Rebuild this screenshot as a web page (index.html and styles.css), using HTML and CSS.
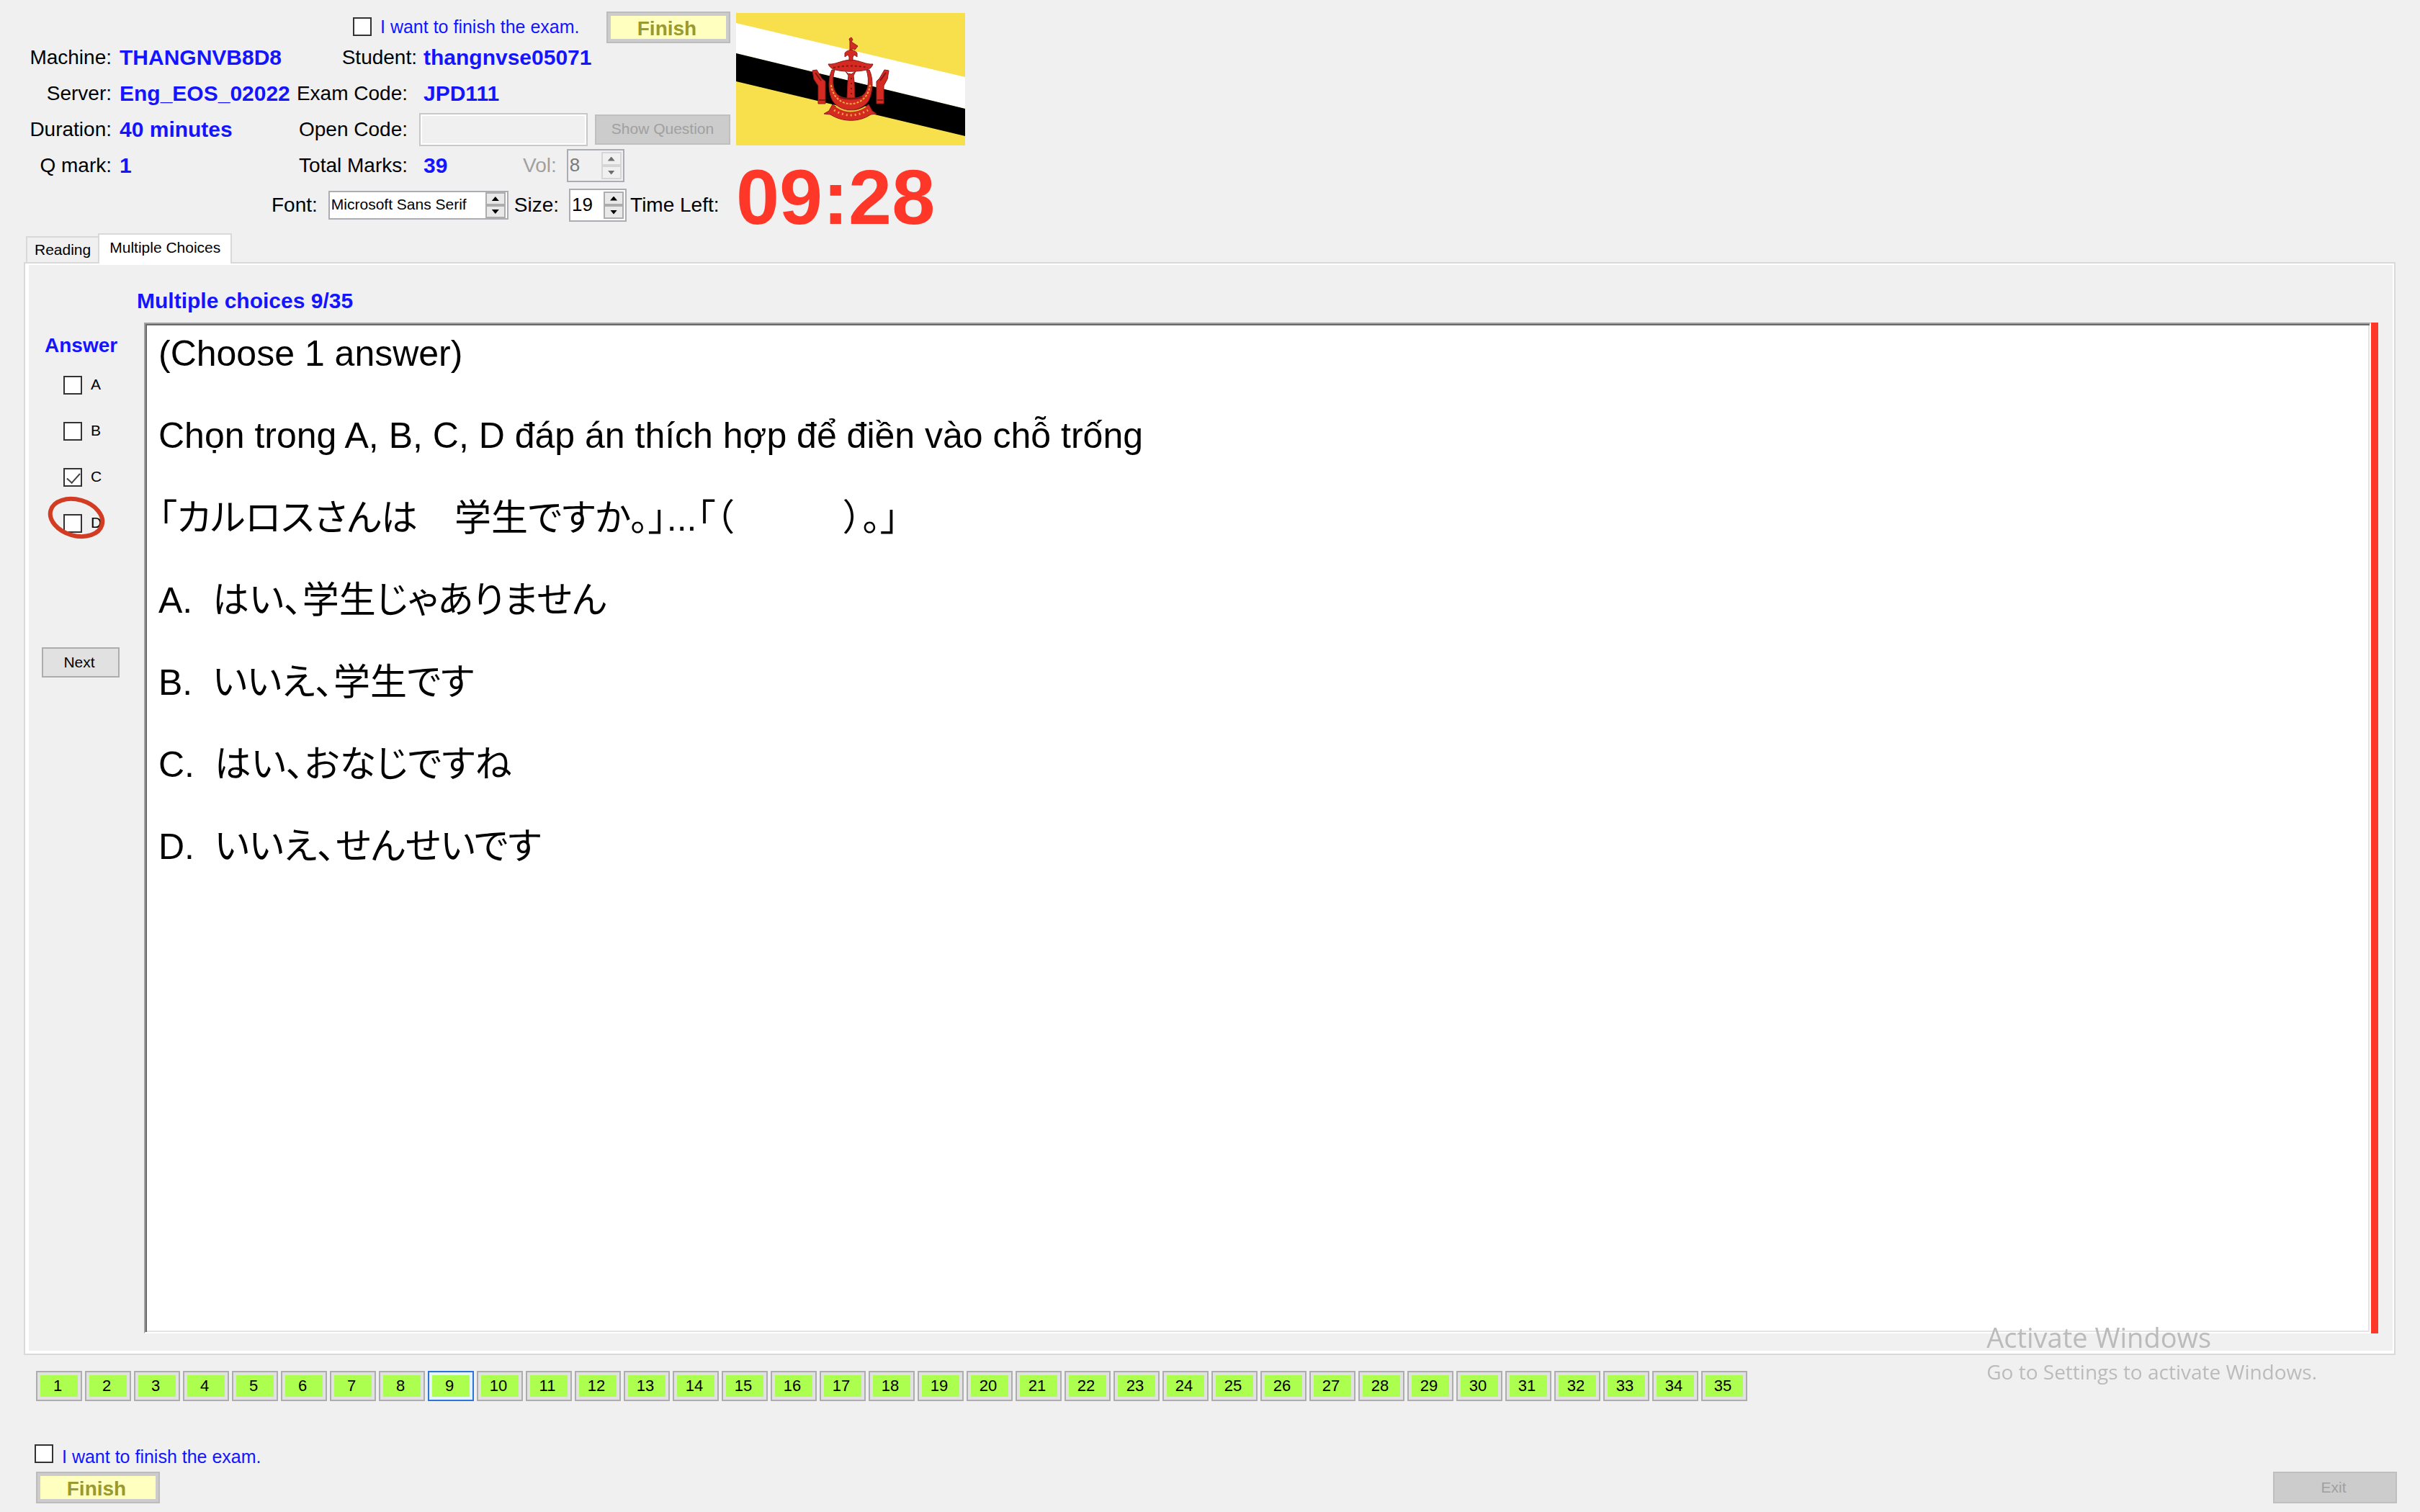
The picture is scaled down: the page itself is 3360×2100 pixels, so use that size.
FILE: index.html
```html
<!DOCTYPE html>
<html lang="en">
<head>
<meta charset="utf-8">
<title>Exam Client</title>
<link rel="stylesheet" href="styles.css">
</head>
<body>
<header class="top">
  <form class="info">
    <div class="finish-row">
      <label class="confirm"><input type="checkbox" class="check">I want to finish the exam.</label>
      <button type="button" class="btn btn-finish" disabled>Finish</button>
    </div>
    <dl class="facts">
      <dt>Machine:</dt><dd>THANGNVB8D8</dd>
      <dt class="near">Student:</dt><dd class="wide">thangnvse05071</dd>
      <dt>Server:</dt><dd>Eng_EOS_02022</dd>
      <dt>Exam Code:</dt><dd class="wide">JPD111</dd>
      <dt>Duration:</dt><dd>40 minutes</dd>
      <dt><label for="open-code">Open Code:</label></dt>
      <dd class="controls"><input type="text" id="open-code" class="open-code" disabled><button type="button" class="btn btn-show" disabled>Show Question</button></dd>
      <dt>Q mark:</dt><dd>1</dd>
      <dt>Total Marks:</dt>
      <dd class="controls marks"><span class="total">39</span><label for="vol" class="dim">Vol:</label>
        <span class="spinner off"><input type="text" id="vol" value="8" disabled><span class="steps"><button type="button" class="up" aria-label="Volume up" disabled></button><button type="button" class="down" aria-label="Volume down" disabled></button></span></span></dd>
    </dl>
    <div class="font-row">
      <label for="font">Font:</label>
      <span class="spinner font-box"><input type="text" id="font" value="Microsoft Sans Serif"><span class="steps"><button type="button" class="up" aria-label="Previous font"></button><button type="button" class="down" aria-label="Next font"></button></span></span>
      <label for="size" class="size-label">Size:</label>
      <span class="spinner"><input type="text" id="size" value="19"><span class="steps"><button type="button" class="up" aria-label="Larger"></button><button type="button" class="down" aria-label="Smaller"></button></span></span>
      <span class="left-label">Time Left:</span>
    </div>
  </form>
  <div class="clock">
    <svg class="flag" viewBox="0 0 318 184" role="img" aria-label="Flag of Brunei">
      <rect width="318" height="184" fill="#f7e04b"/>
      <path d="M0 14 318 89V133L0 56Z" fill="#fff"/>
      <path d="M0 56 318 133V171L0 95Z" fill="#000"/>
      <g fill="#d42a22" stroke="#8e1a17" stroke-width="1">
        <path d="M133 79C127 92 128 112 134 122C145 139 173 139 184 122C190 110 191 92 185 79L181 79C186 95 183 110 175 115C166 120 152 120 143 115C135 110 132 95 137 79Z"/>
        <path d="M155 84 152 81 156 87 155 96 154 118H165L164 96 163 87 166 81 160 85Z"/>
        <path d="M128 71C138 72 145 66 159 65C173 66 180 72 190 71C188 77 184 78 181 79C168 82 150 82 138 79C134 78 130 76 128 71Z"/>
        <path d="M151 61V56C153 52 156 53 158 51H161C163 53 166 52 168 56V61L164 58 162 61V66H157V61L155 58Z"/>
        <path d="M158 51V39L157 36 160 34 162 37 160 40 169 46 165 51 161 49V52Z"/>
        <path d="M106 80 112 79 119 91 124 95V126H114V101L108 92Z"/>
        <path d="M212 80 206 79 199 91 195 95V126H205V101L210 92Z"/>
        <path d="M134 127C149 139 169 139 184 127L189 136 195 140 187 141C171 152 148 152 131 141L122 140 129 136Z"/>
      </g>
      <g fill="none" stroke="#7c1815" stroke-width="2">
        <path d="M110 83 118 94M208 83 200 94M115 121H124M196 121H204M143 117Q159 122 175 117"/>
        <path d="M135 76Q159 71 183 76" stroke-dasharray="3 3"/>
        <path d="M160 90V116" stroke-dasharray="2 5"/>
      </g>
      <g fill="none" stroke="#f2a83a" stroke-width="2">
        <path d="M132 100C136 135 182 135 186 100" stroke-dasharray="3 2"/>
        <path d="M139 130Q159 143 180 130" stroke="#e8c93c"/>
        <path d="M136 135Q159 149 183 135" stroke-width="3" stroke-dasharray="2 4"/>
      </g>
    </svg>
    <output class="time">09:28</output>
  </div>
</header>

<nav class="tabs" role="tablist">
  <button type="button" class="tab" role="tab" aria-selected="false">Reading</button>
  <button type="button" class="tab current" role="tab" aria-selected="true">Multiple Choices</button>
</nav>

<main class="panel">
  <div class="sheet">
    <h1 class="title">Multiple choices 9/35</h1>
    <div class="work">
      <fieldset class="answers">
        <legend>Answer</legend>
        <label class="choice"><input type="checkbox" class="check">A</label>
        <label class="choice"><input type="checkbox" class="check">B</label>
        <label class="choice"><input type="checkbox" class="check" checked>C</label>
        <label class="choice"><input type="checkbox" class="check">D
          <svg class="ring" viewBox="0 0 80 64" aria-hidden="true"><ellipse cx="40" cy="32" rx="37" ry="25" transform="rotate(16 40 32)" fill="none" stroke="#d23c22" stroke-width="6"/></svg>
        </label>
        <button type="button" class="btn btn-next">Next</button>
      </fieldset>
      <article class="question">
        <p>(Choose 1 answer)</p>
        <p lang="vi">Chọn trong A, B, C, D đáp án thích hợp để điền vào chỗ trống</p>
        <p><span class="ja" lang="ja">「カルロスさんは　学生ですか。」</span>...<span class="ja" lang="ja">「（　　　）。」</span></p>
        <p>A.&nbsp; <span class="ja" lang="ja">はい、学生じゃありません</span></p>
        <p>B.&nbsp; <span class="ja" lang="ja">いいえ、学生です</span></p>
        <p>C.&nbsp; <span class="ja" lang="ja">はい、おなじですね</span></p>
        <p>D.&nbsp; <span class="ja" lang="ja">いいえ、せんせいです</span></p>
      </article>
      <div class="strip"></div>
    </div>
  </div>
</main>

<nav class="numbers" aria-label="Questions">
  <button type="button">1</button><button type="button">2</button><button type="button">3</button><button type="button">4</button><button type="button">5</button><button type="button">6</button><button type="button">7</button><button type="button">8</button><button type="button" class="active">9</button><button type="button">10</button><button type="button">11</button><button type="button">12</button><button type="button">13</button><button type="button">14</button><button type="button">15</button><button type="button">16</button><button type="button">17</button><button type="button">18</button><button type="button">19</button><button type="button">20</button><button type="button">21</button><button type="button">22</button><button type="button">23</button><button type="button">24</button><button type="button">25</button><button type="button">26</button><button type="button">27</button><button type="button">28</button><button type="button">29</button><button type="button">30</button><button type="button">31</button><button type="button">32</button><button type="button">33</button><button type="button">34</button><button type="button">35</button>
</nav>

<footer class="bottom">
  <div class="bottom-finish">
    <label class="confirm"><input type="checkbox" class="check">I want to finish the exam.</label>
    <button type="button" class="btn btn-finish" disabled>Finish</button>
  </div>
  <button type="button" class="btn btn-exit" disabled>Exit</button>
</footer>

<aside class="watermark">
  <p class="wm-title">Activate Windows</p>
  <p class="wm-text">Go to Settings to activate Windows.</p>
</aside>
</body>
</html>
```
FILE: styles.css
```css
* { box-sizing: border-box; }

body {
  margin: 0;
  padding: 16px 0 12px;
  min-height: 100vh;
  display: flex;
  flex-direction: column;
  background: #f0f0f0;
  color: #000;
  font: 28px/50px "Liberation Sans", "Noto Sans CJK JP", sans-serif;
}

button, input { font: inherit; color: inherit; margin: 0; border-radius: 0; }
p, h1, dl, dd { margin: 0; }

/* Tick boxes */
.check {
  appearance: none;
  flex: none;
  width: 26px;
  height: 26px;
  border: 2px solid #333;
  background: #fff;
}
.check:checked::after {
  content: "";
  display: block;
  width: 16px;
  height: 8px;
  margin: 5px 3px;
  border: solid #444;
  border-width: 0 0 2px 2px;
  transform: rotate(-48deg);
}
.confirm {
  display: flex;
  gap: 12px;
  color: #1414ff;
  font-size: 25px;
  line-height: 26px;
}

/* Buttons */
.btn {
  padding: 0;
  border: 2px solid #adadad;
  background: #e1e1e1;
  font-size: 21px;
  line-height: 24px;
  text-align: center;
}
.btn:disabled { border-color: #bfbfbf; background: #ccc; color: #a0a0a0; }
.btn-finish:disabled {
  width: 172px;
  height: 44px;
  border-color: #bcbcbc;
  background: #ffffc0;
  box-shadow: inset 0 0 0 4px #ccc;
  color: #99992e;
  font-size: 28px;
  font-weight: bold;
  line-height: 36px;
  padding: 3px 4px 0 0;
}
.btn-show { width: 188px; height: 42px; padding-bottom: 2px; }
.btn-next { width: 108px; height: 42px; padding-right: 4px; }
.btn-exit { width: 172px; height: 44px; padding-right: 4px; }

/* Header */
.top { display: flex; gap: 8px; padding-bottom: 9px; }
.info { width: 1014px; flex: none; }
.finish-row {
  display: flex;
  align-items: flex-start;
  justify-content: space-between;
  height: 39px;
  padding-left: 490px;
}
.finish-row .confirm { padding-top: 8px; }

.facts {
  display: grid;
  grid-template-columns: 155px 256px 171px 1fr;
  grid-auto-rows: 50px;
  white-space: nowrap;
}
.facts dt { text-align: right; }
.facts dt:nth-of-type(even) { padding-right: 16px; }
.facts dt.near:nth-of-type(even) { padding-right: 3px; }
.facts dd { padding-left: 11px; color: #1414ff; font-size: 30px; font-weight: bold; }
.facts dd.wide { padding-left: 6px; }
.facts dd.controls {
  display: flex;
  align-items: center;
  gap: 10px;
  padding: 0;
  font-weight: normal;
}
.facts dd.marks { gap: 0; }
.total { width: 144px; padding-left: 6px; font-weight: bold; }
.dim { margin-right: 14px; color: #a0a0a0; font-size: 28px; }
.open-code {
  width: 234px;
  height: 46px;
  border: 2px solid #c8c8c8;
  background: #f0f0f0;
  box-shadow: inset 0 0 0 2px #fff;
}

.spinner {
  display: flex;
  width: 80px;
  height: 46px;
  padding: 2px;
  border: 2px solid #abadb3;
  background: #fff;
  color: #000;
}
.spinner input {
  flex: 1;
  min-width: 0;
  padding: 0 0 2px;
  border: 0;
  background: none;
  font-size: 26px;
  line-height: 34px;
}
.font-box { width: 250px; height: 40px; padding: 0 2px; }
.spinner.font-box input { font-size: 21px; line-height: 30px; }
.spinner.off { background: #f0f0f0; color: #7a7a7a; }
.steps { display: flex; flex-direction: column; width: 28px; }
.steps button {
  flex: 1;
  display: grid;
  place-items: center;
  padding: 0;
  border: 2px solid #adadad;
  background: #e9e9e9;
}
.steps button::after {
  content: "";
  width: 10px;
  height: 6px;
  background: #000;
  clip-path: polygon(50% 0, 100% 100%, 0 100%);
}
.steps .down::after { clip-path: polygon(0 0, 100% 0, 50% 100%); }
.off .steps button { border-color: #d6d6d6; background: #f0f0f0; }
.off .steps button::after { background: #6d6d6d; }

.font-row { display: flex; align-items: center; height: 60px; padding-left: 377px; }
.font-box { margin: 0 8px 0 15px; }
.size-label { margin-right: 14px; }
.left-label { margin-left: 5px; white-space: nowrap; }

.clock { padding-top: 2px; }
.flag { display: block; width: 318px; height: 184px; }
.time {
  display: block;
  margin-top: 32px;
  color: #ff3728;
  font-size: 108px;
  font-weight: bold;
  line-height: 80px;
}

/* Tabs and sheet */
.tabs { display: flex; align-items: flex-end; padding-left: 36px; }
.tab {
  height: 36px;
  padding: 0 10px;
  border: 2px solid #d9d9d9;
  border-bottom: 0;
  background: #f0f0f0;
  font-size: 21px;
  line-height: 32px;
}
.tab.current {
  z-index: 1;
  height: 42px;
  margin: 0 0 -2px -2px;
  padding: 0 14px 4px;
  background: #fff;
}
.panel {
  flex: 1;
  display: flex;
  margin: 0 34px 0 33px;
  padding: 2px 2px 4px 5px;
  border: 2px solid #d9d9d9;
  background: #fff;
}
.sheet {
  flex: 1;
  display: flex;
  flex-direction: column;
  padding: 0 20px 24px 0;
  background: #f0f0f0;
}
.title {
  padding: 30px 0 10px 150px;
  color: #1414ff;
  font-size: 30px;
  line-height: 40px;
}
.work { flex: 1; display: flex; }

.answers {
  flex: none;
  width: 160px;
  margin: 0;
  padding: 0 0 0 18px;
  border: 0;
}
.answers legend {
  padding: 12px 0 22px 4px;
  color: #1414ff;
  font-size: 28px;
  font-weight: bold;
  line-height: 40px;
}
.choice {
  position: relative;
  display: flex;
  gap: 12px;
  height: 26px;
  margin: 0 0 38px 30px;
  font-size: 21px;
  line-height: 24px;
}
.ring { position: absolute; left: -22px; top: -27px; width: 80px; height: 64px; }
.btn-next { margin-top: 121px; }

.question {
  flex: 1;
  display: flex;
  flex-direction: column;
  gap: 56px;
  padding: 12px 18px;
  border: 2px solid;
  border-color: #a0a0a0 #fff #fff #a0a0a0;
  background: #fff;
  box-shadow: inset 2px 2px #696969, inset -2px -2px #e3e3e3;
  font-size: 50px;
  line-height: 58px;
}
.question p { height: 58px; }
.ja {
  font-family: "Noto Sans CJK JP", sans-serif;
  font-feature-settings: "palt";
  font-size: 51px;
  line-height: 1;
}
.strip { width: 10px; background: #ff3728; }

/* Question numbers */
.numbers { display: flex; flex-wrap: wrap; gap: 4px; padding: 22px 50px 0; }
.numbers button {
  width: 64px;
  height: 42px;
  padding: 0 4px 0 0;
  border: 2px solid #adadad;
  background: #adff4f;
  box-shadow: inset 0 0 0 4px #e1e1e1;
  font-size: 22px;
  line-height: 24px;
}
.numbers .active { border-color: #2a74da; box-shadow: inset 0 0 0 4px #e5f1fb; }

/* Footer */
.bottom {
  display: flex;
  justify-content: space-between;
  align-items: flex-end;
  padding: 60px 32px 0 48px;
}
.bottom .confirm { margin-bottom: 4px; line-height: 34px; }
.bottom .btn-finish { display: block; margin-left: 2px; }

.watermark {
  position: fixed;
  right: 143px;
  bottom: 172px;
  color: #bbb;
  font-family: "Open Sans", sans-serif;
}
.wm-title { font-size: 38px; line-height: 50px; }
.wm-text { font-size: 28px; line-height: 46px; }
```
